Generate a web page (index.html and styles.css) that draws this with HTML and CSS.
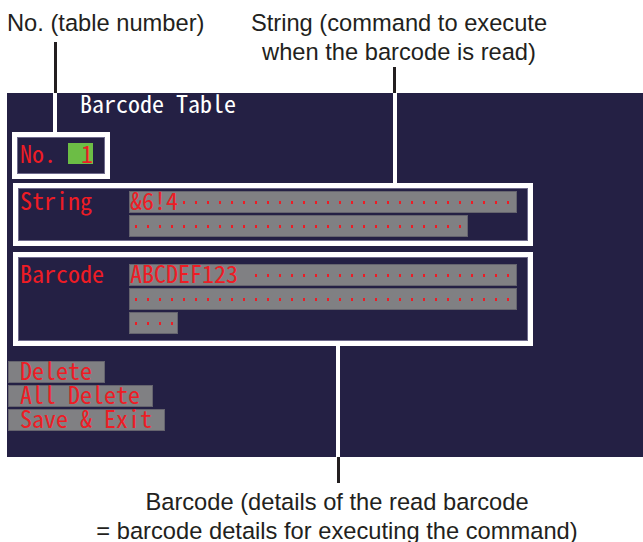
FILE: index.html
```html
<!DOCTYPE html>
<html>
<head>
  <meta charset="UTF-8">
  <title>Barcode Table</title>
  <link rel="stylesheet" href="styles.css">
</head>
<body>
<div class="page">
  <div class="captions">
    <div class="cap-no">No. (table number)</div>
    <div class="cap-string">String (command to execute<br>when the barcode is read)</div>
  </div>

  <div class="screen">
    <div class="screen-title">Barcode Table</div>

    <div class="no-box callout">
      <span class="no-label">No.</span>
      <span class="no-value">1</span>
    </div>

    <div class="entry callout entry-string">
      <div class="entry-label">String</div>
      <div class="fields">
        <div class="field w32"><span class="val">&amp;6!4</span><span class="dots"></span></div>
        <div class="field w28"><span class="dots"></span></div>
      </div>
    </div>

    <div class="entry callout entry-barcode">
      <div class="entry-label">Barcode</div>
      <div class="fields">
        <div class="field w32"><span class="val">ABCDEF123 </span><span class="dots"></span></div>
        <div class="field w32"><span class="dots"></span></div>
        <div class="field w4"><span class="dots"></span></div>
      </div>
    </div>

    <div class="menu">
      <div class="menu-item">Delete</div>
      <div class="menu-item">All Delete</div>
      <div class="menu-item">Save &amp; Exit</div>
    </div>
  </div>

  <div class="cap-barcode">Barcode (details of the read barcode<br>= barcode details for executing the command)</div>

  <!-- leader lines -->
  <div class="lead dark" style="left:54px; top:42px; height:51px"></div>
  <div class="lead light" style="left:53px; top:93px; height:39px"></div>
  <div class="lead dark" style="left:393px; top:67px; height:26px"></div>
  <div class="lead light" style="left:393px; top:93px; height:90px"></div>
  <div class="lead light" style="left:336px; top:346px; height:111px"></div>
  <div class="lead dark" style="left:337px; top:457px; height:26px"></div>
</div>
</body>
</html>
```

FILE: styles.css
```css
html, body {
  margin: 0;
  overflow: hidden;
  background: #ffffff;
}
.page {
  position: relative;
  width: 643px;
  height: 542px;
  font-family: "Liberation Sans", Arial, sans-serif;
  color: #231f20;
}
.captions {
  display: flex;
  height: 84px;
  padding: 9px 0 0 7px;
  font-size: 23.7px;
  line-height: 29px;
}
.cap-no {
  width: 232px;
}
.cap-string {
  width: 320px;
  text-align: center;
  white-space: nowrap;
}
.cap-barcode {
  padding: 31px 0 0 31px;
  font-size: 23.7px;
  line-height: 29px;
  text-align: center;
  white-space: nowrap;
}

/* device screen */
.screen {
  margin-left: 7px;
  height: 364px;
  background: #242044;
  font-family: "Noto Sans Mono CJK JP", "DejaVu Sans Mono", monospace;
  font-size: 24px;
  color: #ee1c25;
}
.screen-title {
  color: #ffffff;
  box-sizing: border-box;
  height: 24px;
  padding: 0 0 5px 73px;
  line-height: 19px;
}
.callout {
  border: 5px solid #ffffff;
  box-shadow: inset 0 0 0 1px #6e6a8c;
}
.no-box {
  display: flex;
  width: 85px;
  margin: 15px 0 0 5px;
  padding: 6px 0 10px 3px;
}
.no-label,
.no-value {
  box-sizing: border-box;
  height: 21px;
  padding-bottom: 2px;
  line-height: 19px;
}
.no-label {
  width: 48px;
}
.no-value {
  width: 25px;
  text-align: right;
  background: #6cbd45;
}
.entry {
  display: flex;
  width: 510px;
  margin-left: 6px;
}
.entry-string {
  margin-top: 4px;
  padding: 3px 0 4px 0;
}
.entry-barcode {
  margin-top: 6px;
  padding: 7px 0 7px 0;
}
.entry-label {
  width: 109px;
  padding-left: 2px;
  line-height: 18px;
}
.fields {
  display: flex;
  flex-direction: column;
  gap: 2px;
}
.field {
  display: flex;
  height: 22px;
  box-sizing: border-box;
  border: 1px solid #65646e;
  background: #808083;
}
.val {
  white-space: pre;
  line-height: 16px;
  padding-bottom: 4px;
}
.w32 { width: 388px; }
.w28 { width: 339px; }
.w4 { width: 49px; }
.dots {
  flex: 1;
  background: linear-gradient(to right, transparent 5px, #ee1c25 5px, #ee1c25 7px, transparent 7px) 0 50% / 12px 3px repeat-x;
}
.menu {
  display: flex;
  flex-direction: column;
  align-items: flex-start;
  gap: 2px;
  margin: 15px 0 0 1px;
}
.menu-item {
  height: 22px;
  box-sizing: border-box;
  border: 1px solid #65646e;
  background: #808083;
  padding: 0 12px 5px 11px;
  line-height: 15px;
  white-space: pre;
}
.lead {
  position: absolute;
}
.lead.dark {
  width: 3px;
  background: #231f20;
}
.lead.light {
  width: 4px;
  background: #ffffff;
}
```
